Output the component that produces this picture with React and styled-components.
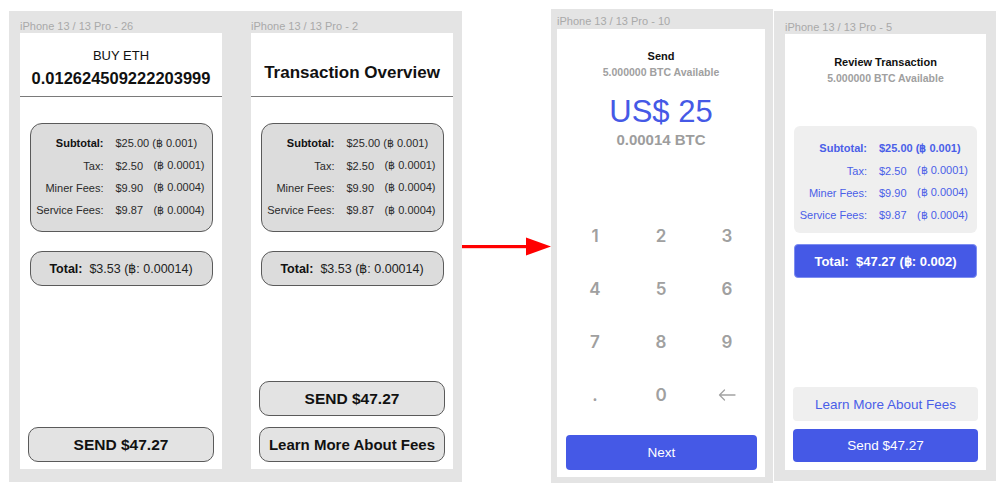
import React from "react";
import styled, { createGlobalStyle } from "styled-components";

const GlobalStyle = createGlobalStyle`
  html, body {
    margin: 0;
    padding: 0;
    background: #fff;
  }
  body {
    font-family: "Liberation Sans", Arial, sans-serif;
    color: #1a1a1a;
  }
  * {
    box-sizing: border-box;
  }
`;

const BLUE = "#4559e6";
const BLUE_TEXT = "#4a5ee8";

const fees = [
  { label: "Subtotal:", value: "$25.00 (฿ 0.001)", strong: true },
  { label: "Tax:", amount: "$2.50", btc: "(฿ 0.0001)" },
  { label: "Miner Fees:", amount: "$9.90", btc: "(฿ 0.0004)" },
  { label: "Service Fees:", amount: "$9.87", btc: "(฿ 0.0004)" },
];

const keys = ["1", "2", "3", "4", "5", "6", "7", "8", "9", ".", "0", "back"];

const BackArrow = () => (
  <svg width="18" height="12" viewBox="0 0 18 12" fill="none">
    <path
      d="M17 6H1.5M6.5 1L1.5 6L6.5 11"
      stroke="#a3a3a3"
      strokeWidth="1.3"
      strokeLinecap="round"
      strokeLinejoin="round"
    />
  </svg>
);

const FeeRows = ({ $tone }) =>
  fees.map((f) => (
    <React.Fragment key={f.label}>
      <FeeLabel $tone={$tone} $strong={f.strong}>
        {f.label}
      </FeeLabel>
      {f.value ? (
        <FeeValue $tone={$tone} $strong={f.strong} $span>
          {f.value}
        </FeeValue>
      ) : (
        <>
          <FeeValue $tone={$tone}>{f.amount}</FeeValue>
          <FeeValue $tone={$tone}>{f.btc}</FeeValue>
        </>
      )}
    </React.Fragment>
  ));

export default function App() {
  return (
    <>
      <GlobalStyle />
      <Canvas>
        <FrameGroup $top={11} $pad="0 9px 13px 11px" $gap={29}>
          <Frame>
            <FrameLabel $h={22} $top={9}>iPhone 13 / 13 Pro - 26</FrameLabel>
            <Screen $w={202} $h={436}>
              <Header $pt={15}>
                <HeaderSmall>BUY ETH</HeaderSmall>
                <HeaderBig $size={16.5}>0.012624509222203999</HeaderBig>
              </Header>
              <GrayFeeBox>
                <FeeRows $tone="gray" />
              </GrayFeeBox>
              <GrayTotal>
                <b>Total:</b>&nbsp; $3.53 (฿: 0.00014)
              </GrayTotal>
              <Bottom>
                <GrayButton>SEND $47.27</GrayButton>
              </Bottom>
            </Screen>
          </Frame>
          <Frame>
            <FrameLabel $h={22} $top={9}>iPhone 13 / 13 Pro - 2</FrameLabel>
            <Screen $w={202} $h={436}>
              <Header $pt={30}>
                <HeaderBig $size={17}>Transaction Overview</HeaderBig>
              </Header>
              <GrayFeeBox>
                <FeeRows $tone="gray" />
              </GrayFeeBox>
              <GrayTotal>
                <b>Total:</b>&nbsp; $3.53 (฿: 0.00014)
              </GrayTotal>
              <Bottom $gap={11}>
                <GrayButton>SEND $47.27</GrayButton>
                <GrayButton $size={15}>Learn More About Fees</GrayButton>
              </Bottom>
            </Screen>
          </Frame>
        </FrameGroup>

        <Arrow width="89" height="19" viewBox="0 0 89 19">
          <rect x="0" y="8" width="66" height="3.2" fill="#ff0000" />
          <polygon points="64,0.5 89,9.5 64,18.5" fill="#ff0000" />
        </Arrow>

        <FrameGroup $top={9} $pad="0 8px 6px 6px">
          <Frame>
            <FrameLabel $h={20} $top={6}>iPhone 13 / 13 Pro - 10</FrameLabel>
            <Screen $w={208} $h={448}>
              <AppTitle $top={20}>Send</AppTitle>
              <Available>5.000000 BTC Available</Available>
              <Amount>US$ 25</Amount>
              <AmountBtc>0.00014 BTC</AmountBtc>
              <Keypad>
                {keys.map((k) => (
                  <Key key={k}>{k === "back" ? <BackArrow /> : k}</Key>
                ))}
              </Keypad>
              <NextButton>Next</NextButton>
            </Screen>
          </Frame>
        </FrameGroup>

        <FrameGroup $top={11} $left={1} $pad="0 10px 11px 11px">
          <Frame>
            <FrameLabel $h={23} $top={10}>iPhone 13 / 13 Pro - 5</FrameLabel>
            <Screen $w={201} $h={436}>
              <AppTitle $top={21}>Review Transaction</AppTitle>
              <Available>5.000000 BTC Available</Available>
              <LightFeeBox>
                <FeeRows $tone="blue" />
              </LightFeeBox>
              <BlueTotal>Total:&nbsp; $47.27 (฿: 0.002)</BlueTotal>
              <Bottom $gap={8} $bottom={8}>
                <LightButton>Learn More About Fees</LightButton>
                <SendButton>Send $47.27</SendButton>
              </Bottom>
            </Screen>
          </Frame>
        </FrameGroup>
      </Canvas>
    </>
  );
}

const Canvas = styled.div`
  display: flex;
  align-items: flex-start;
  padding-left: 9px;
  width: 1003px;
  height: 494px;
  overflow: hidden;
`;

const FrameGroup = styled.div`
  display: flex;
  gap: ${(p) => p.$gap || 0}px;
  margin-top: ${(p) => p.$top}px;
  margin-left: ${(p) => p.$left || 0}px;
  padding: ${(p) => p.$pad};
  background: #e4e4e4;
`;

const Frame = styled.div`
  display: flex;
  flex-direction: column;
`;

const FrameLabel = styled.div`
  height: ${(p) => p.$h}px;
  padding-top: ${(p) => p.$top}px;
  font-size: 11px;
  line-height: 13px;
  color: #a9a9a9;
  white-space: nowrap;
`;

const Screen = styled.div`
  width: ${(p) => p.$w}px;
  height: ${(p) => p.$h}px;
  background: #fff;
  display: flex;
  flex-direction: column;
  align-items: center;
`;

const Header = styled.div`
  align-self: stretch;
  height: 64px;
  border-bottom: 1px solid #7a7a7a;
  display: flex;
  flex-direction: column;
  align-items: center;
  gap: 6px;
  padding-top: ${(p) => p.$pt}px;
`;

const HeaderSmall = styled.div`
  font-size: 13px;
  line-height: 15px;
  color: #111;
`;

const HeaderBig = styled.div`
  font-size: ${(p) => p.$size}px;
  font-weight: 700;
  line-height: 19px;
  color: #111;
  white-space: nowrap;
`;

const FeeGrid = styled.div`
  width: 183px;
  display: grid;
  grid-template-columns: 85px 38px 1fr;
  grid-auto-rows: 22.4px;
  align-items: center;
  font-size: 11px;
`;

const GrayFeeBox = styled(FeeGrid)`
  margin-top: 26px;
  height: 109px;
  padding: 8px 0 10px;
  background: #dcdcdc;
  border: 1px solid #5a5a5a;
  border-radius: 12px;
`;

const LightFeeBox = styled(FeeGrid)`
  margin-top: 41px;
  height: 107px;
  padding: 11px 0 7px;
  background: #efefef;
  border-radius: 6px;
`;

const FeeLabel = styled.span`
  text-align: right;
  padding-right: 12px;
  white-space: nowrap;
  font-weight: ${(p) => (p.$strong ? 700 : 400)};
  color: ${(p) => (p.$tone === "blue" ? BLUE_TEXT : p.$strong ? "#111" : "#2a2a2a")};
`;

const FeeValue = styled.span`
  white-space: nowrap;
  grid-column: ${(p) => (p.$span ? "span 2" : "auto")};
  font-weight: ${(p) => (p.$strong && p.$tone === "blue" ? 700 : 400)};
  color: ${(p) => (p.$tone === "blue" ? BLUE_TEXT : "#2a2a2a")};
`;

const GrayTotal = styled.div`
  margin-top: 19px;
  width: 183px;
  height: 35px;
  display: flex;
  align-items: center;
  justify-content: center;
  background: #dcdcdc;
  border: 1px solid #5a5a5a;
  border-radius: 12px;
  font-size: 12.5px;
  color: #222;
  white-space: nowrap;

  b {
    color: #111;
  }
`;

const Bottom = styled.div`
  margin-top: auto;
  align-self: stretch;
  display: flex;
  flex-direction: column;
  align-items: center;
  gap: ${(p) => p.$gap || 0}px;
  padding-bottom: ${(p) => p.$bottom ?? 7}px;
`;

const GrayButton = styled.div`
  width: 186px;
  height: 35px;
  display: flex;
  align-items: center;
  justify-content: center;
  background: #e3e3e3;
  border: 1px solid #5a5a5a;
  border-radius: 10px;
  font-size: ${(p) => p.$size || 15.5}px;
  font-weight: 700;
  color: #111;
  white-space: nowrap;
`;

const AppTitle = styled.div`
  margin-top: ${(p) => p.$top}px;
  font-size: 11px;
  line-height: 14px;
  font-weight: 700;
  color: #111;
  white-space: nowrap;
`;

const Available = styled.div`
  margin-top: 3px;
  font-size: 10.5px;
  line-height: 13px;
  font-weight: 700;
  color: #a0a0a0;
  white-space: nowrap;
`;

const Amount = styled.div`
  margin-top: 16px;
  font-size: 31px;
  line-height: 34px;
  color: ${BLUE};
  white-space: nowrap;
`;

const AmountBtc = styled.div`
  margin-top: 2px;
  font-size: 15px;
  line-height: 18px;
  font-weight: 700;
  color: #9d9d9d;
  white-space: nowrap;
`;

const Keypad = styled.div`
  margin-top: auto;
  width: 198px;
  display: grid;
  grid-template-columns: repeat(3, 66px);
  grid-auto-rows: 53px;
`;

const Key = styled.div`
  display: flex;
  align-items: center;
  justify-content: center;
  font-family: Inter, "Liberation Sans", sans-serif;
  font-size: 17px;
  font-weight: 600;
  color: #a0a0a0;
`;

const BlueButton = styled.div`
  align-self: stretch;
  display: flex;
  align-items: center;
  justify-content: center;
  background: ${BLUE};
  border-radius: 4px;
  color: #fff;
  font-size: 13.5px;
  white-space: nowrap;
`;

const NextButton = styled(BlueButton)`
  height: 35px;
  margin: 14px 8px 7px 9px;
`;

const SendButton = styled(BlueButton)`
  height: 33px;
  margin: 0 8px;
`;

const BlueTotal = styled.div`
  margin-top: 11px;
  width: 183px;
  height: 34px;
  display: flex;
  align-items: center;
  justify-content: center;
  background: ${BLUE};
  border: 1px solid #7d8df0;
  border-radius: 4px;
  color: #fff;
  font-size: 13px;
  font-weight: 700;
  white-space: nowrap;
`;

const LightButton = styled.div`
  align-self: stretch;
  margin: 0 8px;
  height: 34px;
  display: flex;
  align-items: center;
  justify-content: center;
  background: #efefef;
  border-radius: 4px;
  color: ${BLUE_TEXT};
  font-size: 13.5px;
  white-space: nowrap;
`;

const Arrow = styled.svg`
  flex: none;
  margin-top: 237px;
`;
